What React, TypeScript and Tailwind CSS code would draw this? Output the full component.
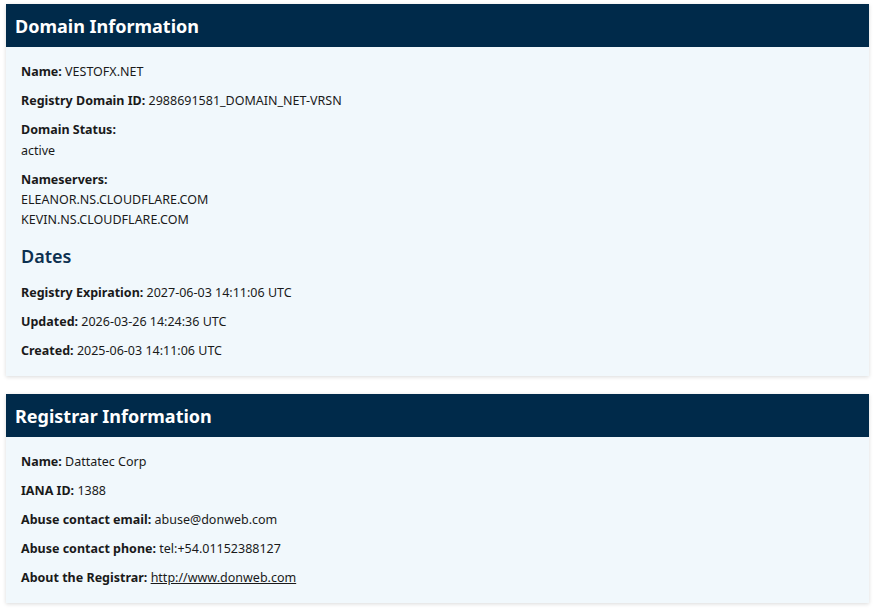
import React from "react";

const Row = ({ label, children }: { label: string; children: React.ReactNode }) => (
  <p className="m-0 leading-[20px]">
    <span className="font-bold">{label}</span> {children}
  </p>
);

export default function App() {
  return (
    <div
      className="bg-white min-h-[609px] pl-[6px] pr-[5px] pt-[4px] text-[#1a1a1a]"
      style={{ fontFamily: '"Noto Sans", "Open Sans", sans-serif' }}
    >
      <section className="bg-[#f1f8fc] shadow-[0_1px_4px_rgba(0,0,0,0.15)]">
        <div className="bg-[#002a4a] h-[43px] flex items-center px-[9px]">
          <h2 className="text-white text-[18px] font-bold leading-none">Domain Information</h2>
        </div>
        <div className="px-[15px] pt-[15px] pb-[15px] text-[12.5px] flex flex-col gap-[9px]">
          <Row label="Name:">VESTOFX.NET</Row>
          <Row label="Registry Domain ID:">2988691581_DOMAIN_NET-VRSN</Row>
          <div className="leading-[20px]">
            <div className="font-bold h-[21px]">Domain Status:</div>
            <div>active</div>
          </div>
          <div className="leading-[20px]">
            <div className="font-bold">Nameservers:</div>
            <div>ELEANOR.NS.CLOUDFLARE.COM</div>
            <div>KEVIN.NS.CLOUDFLARE.COM</div>
          </div>
          <h3 className="text-[18px] font-semibold text-[#0c3050] leading-[24px] mt-[5px] mb-[6px]">Dates</h3>
          <Row label="Registry Expiration:">2027-06-03 14:11:06 UTC</Row>
          <Row label="Updated:">2026-03-26 14:24:36 UTC</Row>
          <Row label="Created:">2025-06-03 14:11:06 UTC</Row>
        </div>
      </section>
      <section className="bg-[#f1f8fc] shadow-[0_1px_4px_rgba(0,0,0,0.15)] mt-[18px]">
        <div className="bg-[#002a4a] h-[43px] flex items-center px-[9px]">
          <h2 className="text-white text-[18px] font-bold leading-none">Registrar Information</h2>
        </div>
        <div className="px-[15px] pt-[15px] pb-[15px] text-[12.5px] flex flex-col gap-[9px]">
          <Row label="Name:">Dattatec Corp</Row>
          <Row label="IANA ID:">1388</Row>
          <Row label="Abuse contact email:">abuse@donweb.com</Row>
          <Row label="Abuse contact phone:">tel:+54.01152388127</Row>
          <Row label="About the Registrar:">
            <a href="#" className="underline text-[#1a1a1a]">http://www.donweb.com</a>
          </Row>
        </div>
      </section>
    </div>
  );
}
